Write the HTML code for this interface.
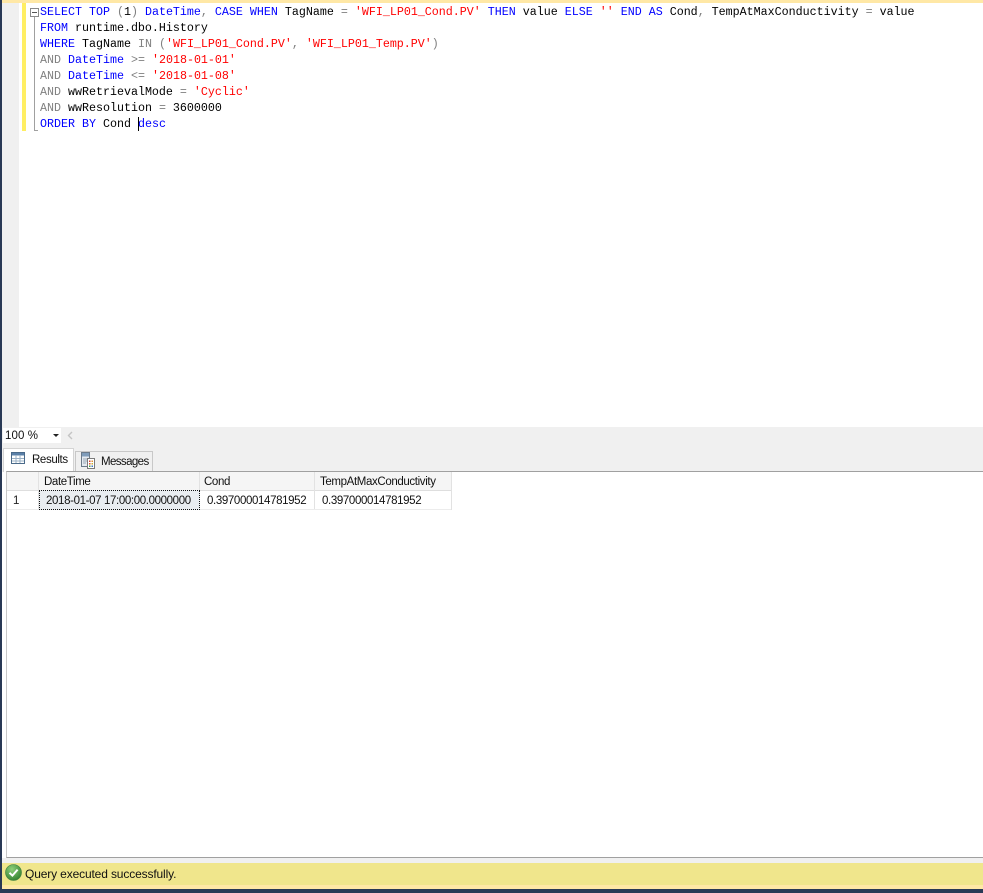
<!DOCTYPE html>
<html><head><meta charset="utf-8">
<style>
html,body{margin:0;padding:0;background:#fff}
#r{position:relative;width:983px;height:893px;overflow:hidden;background:#fff;font-family:"Liberation Sans",sans-serif}
.a{position:absolute}
.l{position:absolute;left:40px;height:16px;line-height:16px;font-family:"Liberation Mono",monospace;font-size:11.67px;white-space:pre;color:#000}
.k{color:#0000ff}.s{color:#ff0000}.g{color:#808080}.m{color:#ff00ff}
.t{position:absolute;font-size:11.5px;line-height:16px;color:#111;white-space:pre;letter-spacing:-.37px}
</style></head><body><div id="r">
<div class="a" style="left:2px;top:0;width:981px;height:3px;background:#ffe8a6"></div>
<div class="a" style="left:2px;top:3px;width:17px;height:424px;background:#f0f0f0"></div>
<div class="a" style="left:22px;top:3px;width:4px;height:128px;background:#ffee62"></div>
<div class="a" style="left:30px;top:8px;width:7px;height:7px;border:1px solid #8a8a8a;background:#fff"></div>
<div class="a" style="left:32px;top:12px;width:5px;height:1px;background:#555"></div>
<div class="a" style="left:34px;top:17px;width:1px;height:113px;background:#a0a0a0"></div>
<div class="a" style="left:34px;top:130px;width:4px;height:1px;background:#a0a0a0"></div>

<div class="l" style="top:4px"><span class="k">SELECT TOP</span> <span class="g">(</span>1<span class="g">)</span> <span class="k">DateTime</span><span class="g">,</span> <span class="k">CASE WHEN</span> TagName <span class="g">=</span> <span class="s">'WFI_LP01_Cond.PV'</span> <span class="k">THEN</span> value <span class="k">ELSE</span> <span class="s">''</span> <span class="k">END AS</span> Cond<span class="g">,</span> TempAtMaxConductivity <span class="g">=</span> value</div>
<div class="l" style="top:20px"><span class="k">FROM</span> runtime.dbo.History</div>
<div class="l" style="top:36px"><span class="k">WHERE</span> TagName <span class="g">IN</span> <span class="g">(</span><span class="s">'WFI_LP01_Cond.PV'</span><span class="g">,</span> <span class="s">'WFI_LP01_Temp.PV'</span><span class="g">)</span></div>
<div class="l" style="top:52px"><span class="g">AND</span> <span class="k">DateTime</span> <span class="g">&gt;=</span> <span class="s">'2018-01-01'</span></div>
<div class="l" style="top:68px"><span class="g">AND</span> <span class="k">DateTime</span> <span class="g">&lt;=</span> <span class="s">'2018-01-08'</span></div>
<div class="l" style="top:84px"><span class="g">AND</span> wwRetrievalMode <span class="g">=</span> <span class="s">'Cyclic'</span></div>
<div class="l" style="top:100px"><span class="g">AND</span> wwResolution <span class="g">=</span> 3600000</div>
<div class="l" style="top:116px"><span class="k">ORDER BY</span> Cond <span class="k">desc</span></div>
<div class="a" style="left:138px;top:117px;width:1px;height:14px;background:#000"></div>

<!-- lower pane -->
<div class="a" style="left:2px;top:427px;width:981px;height:45px;background:#f0f0f0"></div>
<div class="a" style="left:3px;top:428px;width:58px;height:15px;background:#fff"></div>
<div class="t" style="left:5px;top:428px;letter-spacing:.1px;font-size:11.5px">100 %</div>
<svg class="a" style="left:53px;top:434px" width="6" height="4"><path d="M0 0H6L3 3Z" fill="#222"/></svg>
<svg class="a" style="left:67px;top:431px" width="7" height="9"><path d="M5 1L1.5 4.5L5 8" fill="none" stroke="#c4c4c4" stroke-width="1.4"/></svg>

<!-- tabs -->
<div class="a" style="left:3px;top:448px;width:71px;height:24px;background:#fff;border:1px solid #d4d4d4;border-bottom:0;box-sizing:border-box"></div>
<div class="a" style="left:75px;top:451px;width:78px;height:20px;background:#f0f0f0;border:1px solid #c8c8c8;border-bottom:0;box-sizing:border-box"></div>
<svg class="a" style="left:11px;top:452px" width="14" height="12">
<rect x=".5" y=".5" width="13" height="11" fill="#fff" stroke="#4a6a8a"/><rect x="1" y="1" width="12" height="2.5" fill="#5a80a8"/>
<path d="M1 6.5H13M1 9H13M5 3V11M9 3V11" stroke="#9ab0c6" fill="none"/></svg>
<div class="t" style="left:32px;top:452px">Results</div>
<svg class="a" style="left:80px;top:452px" width="15" height="17">
<rect x="1.5" y=".5" width="8" height="14" fill="#e4eaf0" stroke="#6a7a8a"/><rect x="2" y="1" width="7" height="3.5" fill="#7f9cba"/>
<path d="M3 7H8M3 9H8M3 11H6" stroke="#9aa8b6"/>
<rect x="7.5" y="6.5" width="7" height="10" fill="#fff" stroke="#7a7a7a"/><path d="M9 8.5h1.5V10H9z" fill="#d04030"/><path d="M11.5 8.5H13V10h-1.5z" fill="#e09030"/><path d="M9 11h1.5v1.5H9z" fill="#e05030"/><path d="M11.5 11H13v1.5h-1.5z" fill="#d0b030"/><path d="M9 13.5h1.5V15H9z" fill="#40a040"/><path d="M11.5 13.5H13V15h-1.5z" fill="#4070c0"/></svg>
<div class="t" style="left:101px;top:454px;letter-spacing:-.6px">Messages</div>

<!-- grid -->
<div class="a" style="left:6px;top:471px;width:977px;height:387px;background:#fff;border-top:1px solid #a0a0a0;border-left:1px solid #c8c8c8;border-bottom:1px solid #a0a0a0;box-sizing:border-box"></div>
<div class="a" style="left:7px;top:472px;width:445px;height:18px;background:#f5f5f5;border-bottom:1px solid #dedede"></div>
<div class="a" style="left:38px;top:472px;width:1px;height:38px;background:#e2e2e2"></div>
<div class="a" style="left:199px;top:472px;width:1px;height:38px;background:#e2e2e2"></div>
<div class="a" style="left:314px;top:472px;width:1px;height:38px;background:#e2e2e2"></div>
<div class="a" style="left:451px;top:472px;width:1px;height:38px;background:#e2e2e2"></div>
<div class="a" style="left:7px;top:509px;width:444px;height:1px;background:#ececec"></div>
<div class="t" style="left:44px;top:474px">DateTime</div>
<div class="t" style="left:204px;top:474px">Cond</div>
<div class="t" style="left:320px;top:474px">TempAtMaxConductivity</div>
<div class="t" style="left:13px;top:493px;color:#222">1</div>
<div class="a" style="left:39px;top:490px;width:161px;height:20px;background:#e9edf1;border:1px dotted #111;box-sizing:border-box"></div>
<div class="t" style="left:46px;top:493px">2018-01-07 17:00:00.0000000</div>
<div class="t" style="left:207px;top:493px">0.397000014781952</div>
<div class="t" style="left:322px;top:493px">0.397000014781952</div>

<!-- status -->
<div class="a" style="left:2px;top:858px;width:981px;height:5px;background:#f0f0f0"></div>
<div class="a" style="left:2px;top:863px;width:981px;height:22px;background:#f0e68c"></div>
<div class="a" style="left:2px;top:885px;width:981px;height:4px;background:#ffe8a6"></div>
<div class="a" style="left:0;top:889px;width:983px;height:4px;background:#293955"></div>
<div class="a" style="left:0;top:0;width:2px;height:893px;background:#293955"></div>
<svg class="a" style="left:5px;top:864px" width="17" height="17">
<defs><radialGradient id="g" cx=".4" cy=".3" r=".8"><stop offset="0" stop-color="#8fd07a"/><stop offset="1" stop-color="#2a7a2a"/></radialGradient></defs>
<circle cx="8.5" cy="8.5" r="8" fill="url(#g)" stroke="#3f7f3f" stroke-width=".6"/>
<path d="M4.5 8.8L7.4 11.6L12.6 5.6" fill="none" stroke="#fff" stroke-width="2"/></svg>
<div class="t" style="left:25px;top:866px;letter-spacing:-.14px;font-size:12px">Query executed successfully.</div>
</div></body></html>
